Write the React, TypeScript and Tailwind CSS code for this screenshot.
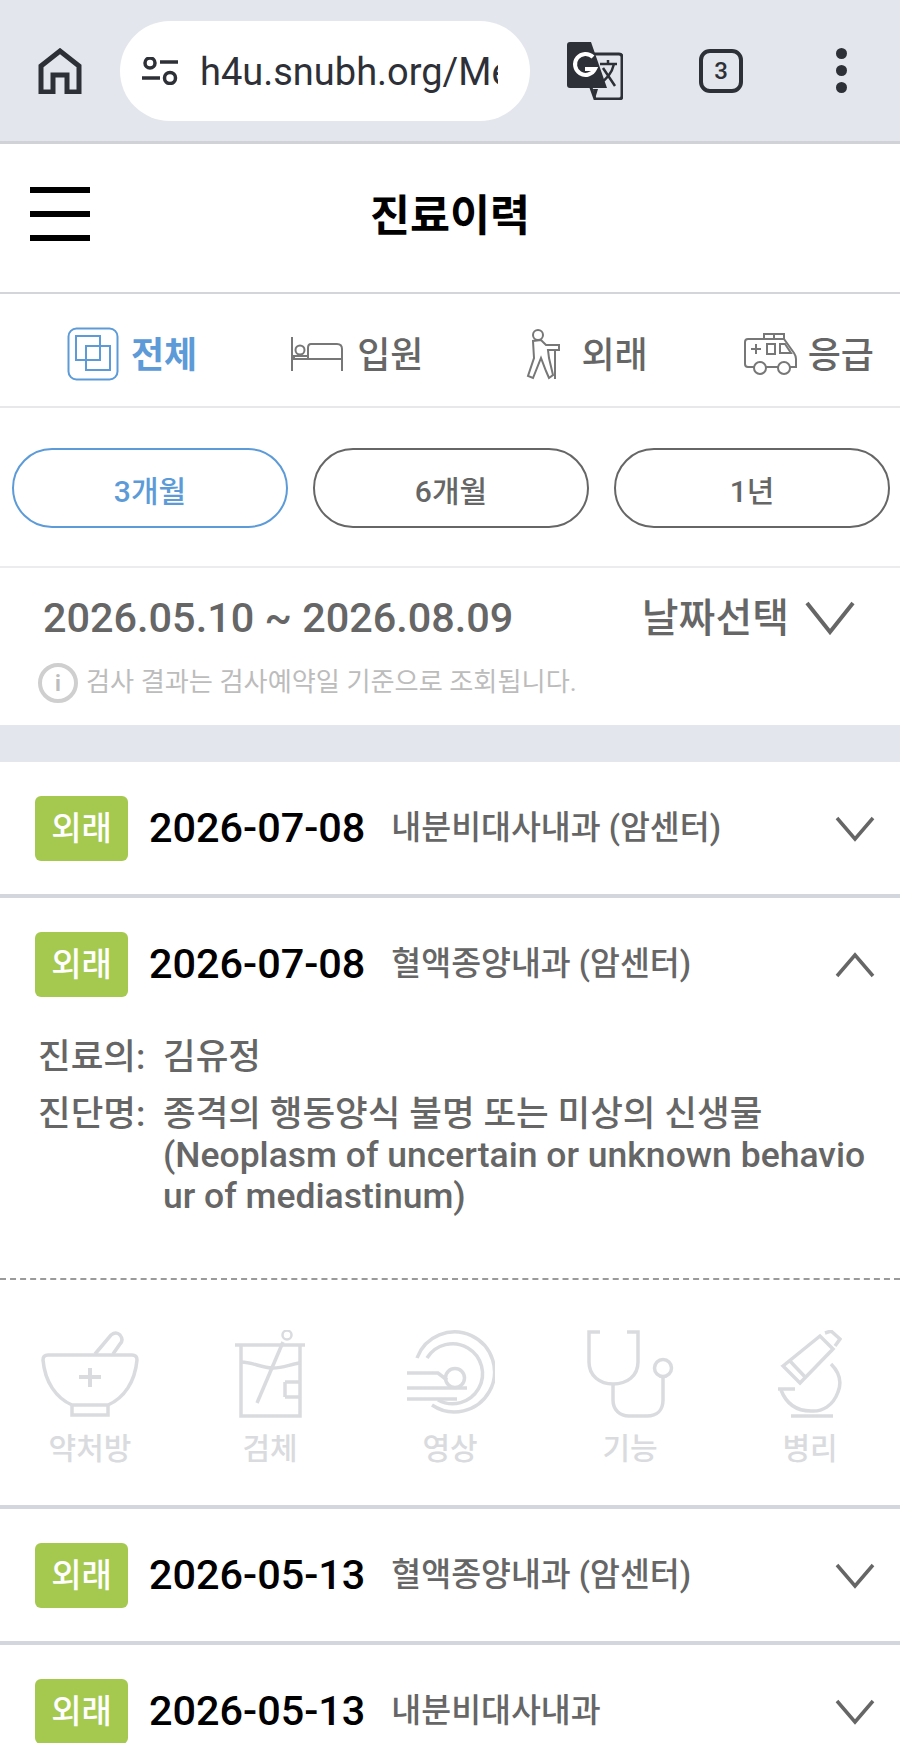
const KR = "font-['Roboto','Noto_Sans_CJK_KR',sans-serif]";

const ChevronDown = ({ className }: { className: string }) => (
  <svg viewBox="0 0 40 26" className={className} fill="none" stroke="#666" strokeWidth="3.5">
    <path d="M2 2 L20 23 L38 2" />
  </svg>
);

const ChevronUp = ({ className }: { className: string }) => (
  <svg viewBox="0 0 40 26" className={className} fill="none" stroke="#666" strokeWidth="3.5">
    <path d="M2 24 L20 3 L38 24" />
  </svg>
);

const Badge = () => (
  <div className="flex h-[65px] w-[93px] shrink-0 items-center justify-center rounded-[6px] bg-[#a5c94f] text-[33px] font-medium text-white">
    외래
  </div>
);

const Row = ({ date, dept, open }: { date: string; dept: string; open?: boolean }) => (
  <div className="flex items-center pl-[35px] pr-[25px]">
    <Badge />
    <span className="ml-[21px] text-[41.4px] font-medium text-black">{date}</span>
    <span className="ml-[26px] text-[32.5px] font-medium text-[#666]">{dept}</span>
    {open ? <ChevronUp className="ml-auto h-[26px] w-[40px]" /> : <ChevronDown className="ml-auto h-[26px] w-[40px]" />}
  </div>
);

const Mortar = () => (
  <svg viewBox="0 0 100 90" className="h-[90px] w-[100px]" fill="none" stroke="#d9dbde" strokeWidth="3.5">
    <path d="M8 25 H92 Q97 25 97 30 C95 52 84 68 68 75 H32 C16 68 5 52 3 30 Q3 25 8 25 Z" />
    <path d="M32 75 V85 H68 V75" />
    <path d="M55 24 L71 5 Q76 1 80 5 Q84 10 80 14 L73 24" />
    <path d="M50 38 V57 M39 47 H61" strokeWidth="4" />
  </svg>
);

const Beaker = () => (
  <svg viewBox="0 0 70 88" className="h-[88px] w-[70px]" fill="none" stroke="#d9dbde" strokeWidth="3.5">
    <path d="M0 15 H70 M6 15 V86 H65 V15" />
    <path d="M6 32 C18 32 26 38 38 38 C48 38 56 34 65 33" />
    <path d="M22 73 L48 12" />
    <circle cx="52" cy="5" r="4.5" strokeWidth="2.5" />
    <path d="M50 52 H65 M50 67 H65 M50 52 V67" />
  </svg>
);

const Scanner = () => (
  <svg viewBox="10 10 90 85" className="h-[85px] w-[90px]" fill="none" stroke="#d9dbde" strokeWidth="3.5">
    <path d="M22 38 A40 40 0 1 1 37 85" />
    <path d="M32 38 A30 30 0 1 1 43 80" />
    <path d="M12 53 H43 L52 60 M12 68 H72 M12 79 H62" />
    <circle cx="60" cy="58" r="9.5" />
  </svg>
);

const Stethoscope = () => (
  <svg viewBox="0 0 90 90" className="h-[90px] w-[90px]" fill="none" stroke="#d9dbde" strokeWidth="3.5">
    <path d="M15 2 H4 V32 C4 46 15 54 28 54 C42 54 53 46 53 32 V2 H42" />
    <path d="M28 54 V70 C28 80 35 86 44 86 H62 C72 86 78 80 78 70 V48" />
    <circle cx="78" cy="38" r="8.5" />
  </svg>
);

const Microscope = () => (
  <svg viewBox="0 0 64 90" className="h-[90px] w-[64px]" fill="none" stroke="#d9dbde" strokeWidth="3.5">
    <path d="M5 36 L42 6 L55 19 L22 53 Z" />
    <path d="M12 31 L28 48" />
    <path d="M47 3 L53 1 L62 9 L57 16" />
    <path d="M53 34 C61 42 64 52 60 62 C55 76 44 82 33 81 C18 81 8 73 3 60" />
    <path d="M0 59 H17" />
    <path d="M13 86 H55" />
  </svg>
);

function Tool({ label, icon }: { label: string; icon: React.ReactNode }) {
  return (
    <div className="flex w-[180px] shrink-0 flex-col items-center">
      <div className="flex h-[90px] items-start">{icon}</div>
      <span className="mt-[9px] text-[30px] leading-[40px] font-medium text-[#d9dbde]">{label}</span>
    </div>
  );
}

export default function App() {
  return (
    <div className={`h-[1743px] w-[900px] overflow-hidden bg-white ${KR}`}>
      {/* browser bar */}
      <div className="flex h-[144px] items-center border-b-[3px] border-[#d0d2d7] bg-[#e3e6ec] pl-[38px]">
        <svg viewBox="0 0 44 46" className="h-[46px] w-[44px]" fill="none" stroke="#2e3038" strokeWidth="5">
          <path d="M3 44 V18 L22 3 L41 18 V44 H29 V27 H15 V44 Z" />
        </svg>
        <div className="ml-[38px] flex h-[100px] w-[410px] items-center overflow-hidden rounded-[50px] bg-white pl-[22px]">
          <svg viewBox="0 0 36 28" className="h-[28px] w-[36px] shrink-0" fill="none" stroke="#2e3038" strokeWidth="3.5">
            <circle cx="8" cy="6" r="5" />
            <circle cx="28" cy="21" r="5.5" />
            <path d="M18 5 H36 M0 21 H18" />
          </svg>
          <span className="ml-[22px] w-[298px] overflow-hidden pt-[3px] text-[38px] whitespace-nowrap text-[#2e3038]">h4u.snubh.org/Me</span>
        </div>
        <svg viewBox="0 0 56 58" className="ml-[37px] h-[58px] w-[56px]">
          <path d="M24 12 H52 Q55 12 55 15 V54 Q55 57 52 57 H28 L22 40 Z" fill="#e3e6ec" stroke="#2e3038" strokeWidth="3" />
          <path d="M0 3 Q0 0 3 0 H24 L40 46 H3 Q0 46 0 43 Z" fill="#2e3038" />
          <path d="M31 47 H26 L28 57 Z" fill="#2e3038" />
          <path d="M26 15 A10.5 10.5 0 1 0 28 27 H18" fill="none" stroke="#fff" strokeWidth="4" />
          <path d="M33 22 H50 M41 18 V22 M47 22 C45 31 39 38 33 41 M36 26 L48 44" fill="none" stroke="#2e3038" strokeWidth="2.5" />
        </svg>
        <div className="ml-[76px] flex h-[44px] w-[44px] items-center justify-center rounded-[11px] border-[4px] border-[#2e3038] text-[24px] font-medium text-[#2e3038]">
          3
        </div>
        <div className="ml-[93px] flex flex-col gap-[6px]">
          <div className="h-[11px] w-[11px] rounded-full bg-[#2e3038]" />
          <div className="h-[11px] w-[11px] rounded-full bg-[#2e3038]" />
          <div className="h-[11px] w-[11px] rounded-full bg-[#2e3038]" />
        </div>
      </div>

      {/* title */}
      <div className="relative flex h-[150px] items-center justify-center border-b-[2px] border-[#d4d5da]">
        <div className="absolute top-[43px] left-[30px] flex w-[60px] flex-col gap-[18px]">
          <div className="h-[6px] bg-black" />
          <div className="h-[6px] bg-black" />
          <div className="h-[6px] bg-black" />
        </div>
        <h1 className="mt-[-3px] text-[43.5px] font-bold text-black">진료이력</h1>
      </div>

      {/* tabs */}
      <div className="flex h-[114px] items-center border-b-[2px] border-[#e8e8ea] pt-[8px] pl-[67px] text-[36px] font-medium text-[#666]">
        <svg viewBox="0 0 52 54" className="h-[54px] w-[52px]" fill="none" stroke="#5c9bd8" strokeWidth="2">
          <rect x="1.5" y="1.5" width="49" height="51" rx="8" />
          <rect x="9" y="9" width="24" height="24" />
          <rect x="19" y="19" width="24" height="24" />
        </svg>
        <span className="ml-[12px] pt-[3px] font-bold text-[#5c9bd8]">전체</span>
        <svg viewBox="0 0 52 34" className="ml-[94px] h-[34px] w-[52px]" fill="none" stroke="#777" strokeWidth="2">
          <path d="M1 0 V34 M51 34 V12 Q51 7 46 7 H20 Q17 7 17 11 V22 M1 22 H51" />
          <circle cx="9" cy="13" r="4.5" />
          <path d="M3 22 V19 H17" />
        </svg>
        <span className="ml-[14px] pt-[3px]">입원</span>
        <svg viewBox="0 0 36 52" className="ml-[102px] h-[52px] w-[36px]" fill="none" stroke="#777" strokeWidth="2">
          <circle cx="12" cy="7" r="5" />
          <path d="M7 13 L8 30 L2 48 L7 50 L15 30 L20 43 L23 50 L27 47 L23 30 L22 22 H33 V17 H20 L15 12 Z" />
          <path d="M29 22 V51" />
        </svg>
        <span className="ml-[20px] pt-[3px]">외래</span>
        <svg viewBox="0 0 54 42" className="ml-[96px] h-[42px] w-[54px]" fill="none" stroke="#777" strokeWidth="2">
          <path d="M10 34 H4 Q1 34 1 31 V9 Q1 6 4 6 H40 L50 20 Q52 23 52 26 V34 H46 M22 34 H34" />
          <path d="M20 6 V1 H40 V6 M30 1 V6" />
          <circle cx="16" cy="35" r="6" />
          <circle cx="40" cy="35" r="6" />
          <path d="M7 16 H17 M12 11 V21" />
          <rect x="23" y="11" width="8" height="10" />
          <path d="M36 11 H41 L47 20 H36 Z" />
        </svg>
        <span className="ml-[10px] pt-[3px]">응급</span>
      </div>

      {/* period pills */}
      <div className="flex h-[160px] items-start gap-[25px] border-b-[2px] border-[#ececee] pt-[40px] pl-[12px] text-[30px] font-medium text-[#666]">
        <button className="h-[80px] w-[276px] rounded-[40px] border-[2px] border-[#5c9bd8] pt-[6px] text-[#5c9bd8]">3개월</button>
        <button className="h-[80px] w-[276px] rounded-[40px] border-[2px] border-[#666] pt-[6px]">6개월</button>
        <button className="h-[80px] w-[276px] rounded-[40px] border-[2px] border-[#666] pt-[6px]">1년</button>
      </div>

      {/* date range */}
      <div className="h-[157px] pl-[38px] pr-[45px]">
        <div className="flex h-[98px] items-center pt-[2px]">
          <span className="pl-[5px] text-[41.4px] font-medium text-[#666]">2026.05.10 ~ 2026.08.09</span>
          <span className="ml-auto pt-[2px] text-[40px] font-medium text-[#666]">날짜선택</span>
          <svg viewBox="0 0 50 34" className="ml-[16px] h-[34px] w-[50px]" fill="none" stroke="#666" strokeWidth="4">
            <path d="M2 2 L25 31 L48 2" />
          </svg>
        </div>
        <div className="mt-[-3px] flex items-center">
          <div className="flex h-[40px] w-[40px] items-center justify-center rounded-full border-[4px] border-[#cfcfcf] text-[22px] font-bold text-[#bdbdbd]">
            i
          </div>
          <span className="ml-[8px] text-[26.2px] text-[#bcbcbc]">검사 결과는 검사예약일 기준으로 조회됩니다.</span>
        </div>
      </div>

      <div className="h-[37px] bg-[#e3e6ec]" />

      {/* records */}
      <div className="h-[136px] border-b-[4px] border-[#d4d6de] pt-[34px]">
        <Row date="2026-07-08" dept="내분비대사내과 (암센터)" />
      </div>
      <div className="h-[611px] border-b-[4px] border-[#d4d6de]">
        <div className="pt-[34px]">
          <Row date="2026-07-08" dept="혈액종양내과 (암센터)" open />
        </div>
        <div className="mt-[40px] h-[241px] pl-[38px] text-[35.5px] leading-[41px] font-medium text-[#666]">
          <div className="flex">
            <span className="w-[125px] shrink-0">진료의:</span>
            <span>김유정</span>
          </div>
          <div className="mt-[16px] flex">
            <span className="w-[125px] shrink-0">진단명:</span>
            <span className="w-[705px] break-all">
              종격의 행동양식 불명 또는 미상의 신생물
              <br />
              (Neoplasm of uncertain or unknown behaviour of mediastinum)
            </span>
          </div>
        </div>
        <div className="border-t-[2px] border-dashed border-[#9a9a9a] pt-[50px]">
          <div className="flex">
            <Tool label="약처방" icon={<Mortar />} />
            <Tool label="검체" icon={<Beaker />} />
            <Tool label="영상" icon={<Scanner />} />
            <Tool label="기능" icon={<Stethoscope />} />
            <Tool label="병리" icon={<Microscope />} />
          </div>
        </div>
      </div>
      <div className="h-[136px] border-b-[4px] border-[#d4d6de] pt-[34px]">
        <Row date="2026-05-13" dept="혈액종양내과 (암센터)" />
      </div>
      <div className="pt-[34px]">
        <Row date="2026-05-13" dept="내분비대사내과" />
      </div>
    </div>
  );
}
